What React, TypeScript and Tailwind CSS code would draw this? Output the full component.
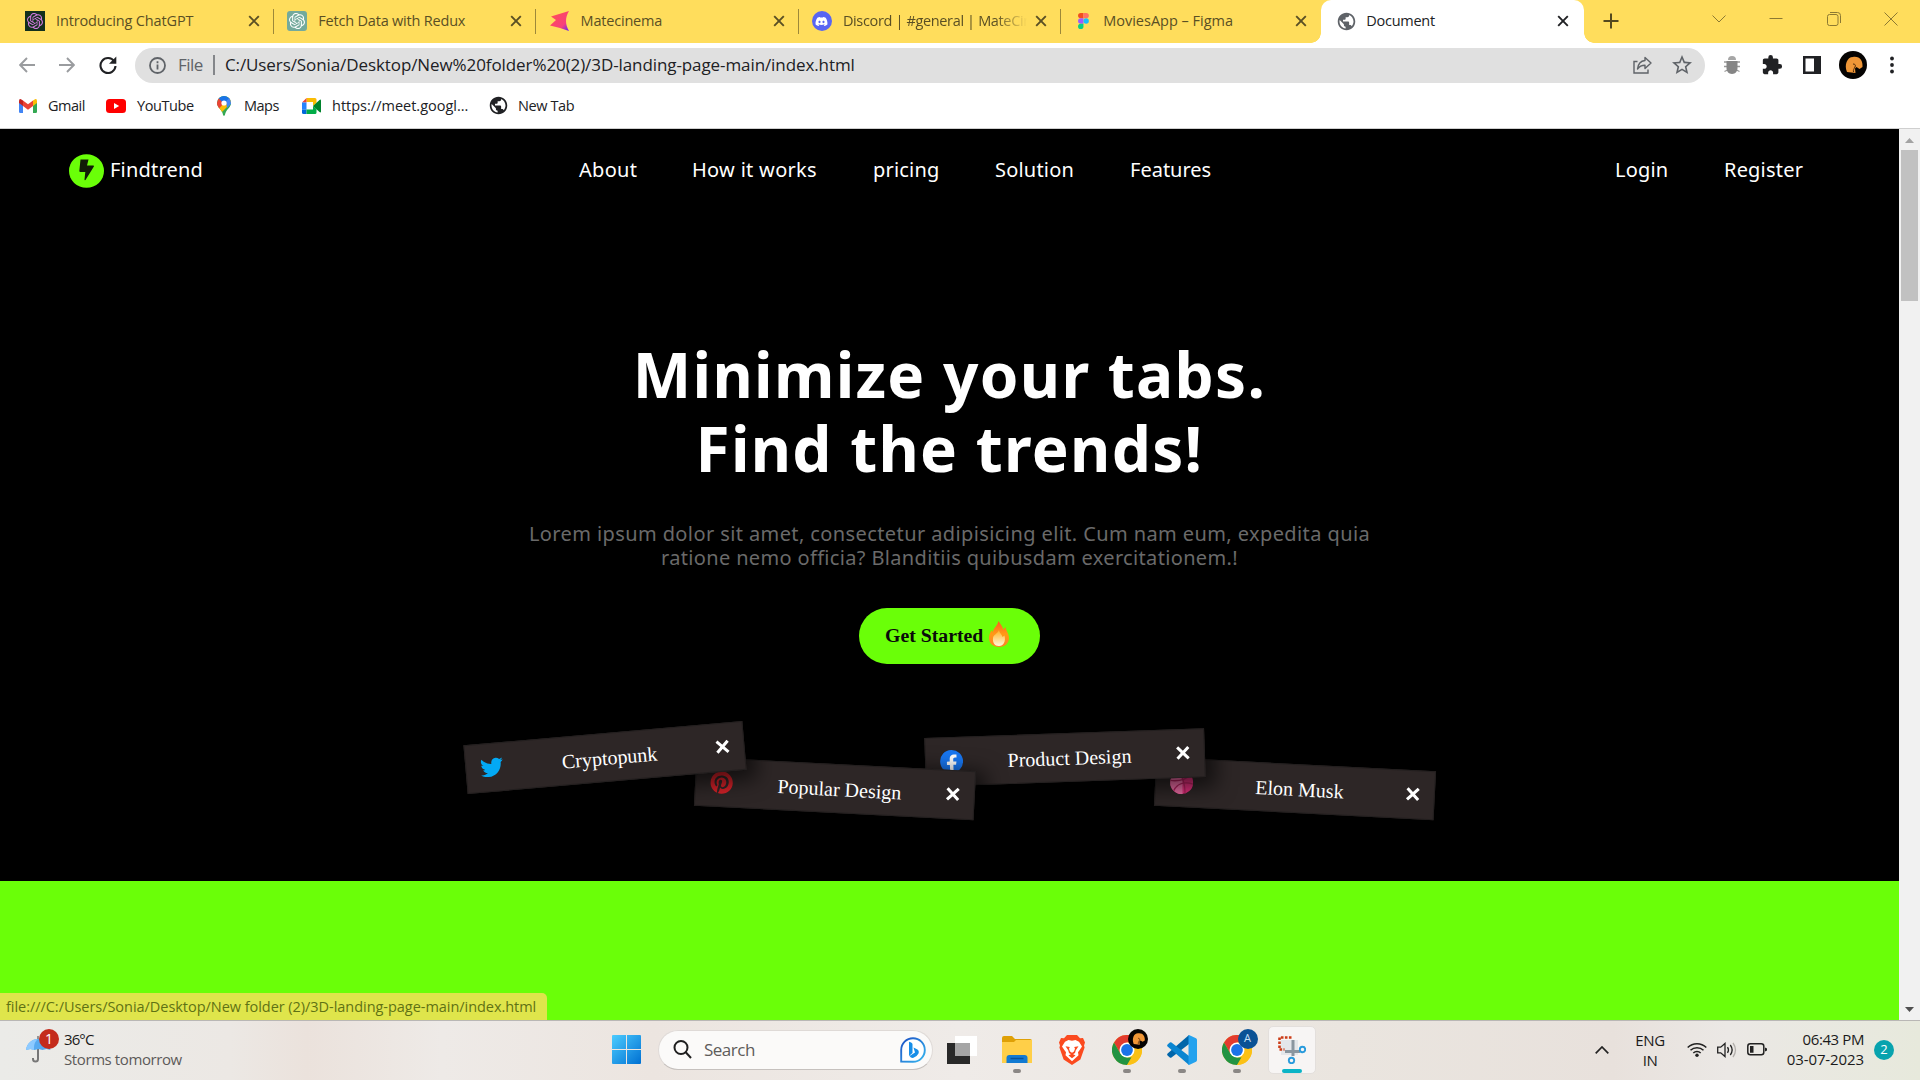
import React from 'react';
import { FaDiscord, FaPinterest, FaTwitter } from 'react-icons/fa';
import { MdExtension, MdPublic, MdStarBorder } from 'react-icons/md';
import { SiOpenai } from 'react-icons/si';

function Cross({ size, stroke }: { size: number; stroke: number }) {
  return (
    <svg width={size} height={size} viewBox="0 0 12 12" fill="none" stroke="currentColor" strokeWidth={stroke}>
      <path d="M1.2 1.2 10.8 10.8M10.8 1.2 1.2 10.8" />
    </svg>
  );
}

function MatecinemaIcon() {
  return (
    <svg width="20" height="20" viewBox="0 0 20 20">
      <defs>
        <linearGradient id="mate" x1="0" y1="0" x2="1" y2="1">
          <stop offset="0" stopColor="#ff5050" />
          <stop offset=".7" stopColor="#f8407c" />
          <stop offset="1" stopColor="#5b20ff" />
        </linearGradient>
      </defs>
      <path d="M19 0 1 5.500 6 9 0 14.500l10 2.500 9 3C15 13 15 7 19 0Z" fill="url(#mate)" />
    </svg>
  );
}

function FigmaIcon() {
  return (
    <svg width="20" height="20" viewBox="0 0 20 20">
      <path d="M10.500 1H7.500a3 3 0 0 0 0 6h3Z" fill="#f24e1e" />
      <path d="M10.500 1h3a3 3 0 0 1 0 6h-3Z" fill="#ff7262" />
      <path d="M10.500 7H7.500a3 3 0 0 0 0 6h3Z" fill="#a259ff" />
      <circle cx="13.500" cy="10" r="3" fill="#1abcfe" />
      <path d="M7.500 13h3v3a3 3 0 1 1-3-3Z" fill="#0acf83" />
    </svg>
  );
}

function GmailIcon() {
  return (
    <svg width="18" height="14" viewBox="0 0 18 14">
      <path d="M0 2v10.700Q0 14 1.300 14H4V6Z" fill="#4285f4" />
      <path d="M18 2v10.700q0 1.300-1.300 1.300H14V6Z" fill="#34a853" />
      <path d="M14 1.500 16 .2q2-.8 2 2V4l-4 3Z" fill="#fbbc04" />
      <path d="M4 1.500 9 5.200l5-3.700V7l-5 3.700L4 7Z" fill="#ea4335" />
      <path d="M4 1.500 2 .2Q0-.6 0 2.200V4l4 3Z" fill="#c5221f" />
    </svg>
  );
}

function YouTubeIcon() {
  return (
    <svg width="20" height="14" viewBox="0 0 20 14">
      <rect width="20" height="14" rx="3.500" fill="#f00" />
      <path d="m8 4 5.200 3L8 10Z" fill="#fff" />
    </svg>
  );
}

function MapsIcon() {
  return (
    <svg width="14" height="20" viewBox="0 0 14 20">
      <defs>
        <clipPath id="pin">
          <path d="M7 0a7 7 0 0 1 7 7c0 4-3.500 5.500-5.200 9.300C8 18 8 20 7 20s-1-2-1.800-3.700C3.500 12.500 0 11 0 7a7 7 0 0 1 7-7Z" />
        </clipPath>
      </defs>
      <g clipPath="url(#pin)">
        <path d="M0 0h14v20H0Z" fill="#34a853" />
        <path d="M-1 14 14-2v9L3 18Z" fill="#fbbc04" />
        <path d="M2 1 7 7l-7 8-2-5Z" fill="#ea4335" />
        <path d="M1.500 2 7-1l6 3-6 6Z" fill="#1a73e8" />
        <path d="M9 5.500 14 0v8l-4 4Z" fill="#4285f4" />
      </g>
      <circle cx="7" cy="7" r="2.600" fill="#fff" />
    </svg>
  );
}

function MeetIcon() {
  return (
    <svg width="19" height="16" viewBox="0 0 19 16">
      <path d="M4.500 0H13q1.500 0 1.500 1.500V5L11 8V4H4.500Z" fill="#fbbc04" />
      <path d="M0 4.500 4.500 0v4.500Z" fill="#ea4335" />
      <path d="M0 4.500h4.500v7H0Z" fill="#2684fc" />
      <path d="M0 11.500h4.500V16h-3Q0 16 0 14.500Z" fill="#0066da" />
      <path d="M4.500 16v-4.500H11V8l3.500 3v3.500Q14.500 16 13 16Z" fill="#00ac47" />
      <path d="m11 8 6.500-6q1.500-1 1.500.5v11q0 1.500-1.500.5Z" fill="#00832d" />
    </svg>
  );
}

const tabs = [
  { title: 'Introducing ChatGPT', track: 'tracking-[-0.15px]', icon: <span className="flex size-5 items-center justify-center bg-[#13301c] text-[#d47be0]"><SiOpenai size={16} /></span> },
  { title: 'Fetch Data with Redux', track: 'tracking-[-0.2px]', icon: <span className="flex size-5 items-center justify-center rounded-[3px] bg-[#74aa9c] text-white"><SiOpenai size={16} /></span> },
  { title: 'Matecinema', track: 'tracking-[-0.2px]', icon: <MatecinemaIcon /> },
  { title: 'Discord | #general | MateCin', track: 'tracking-[-0.35px]', icon: <span className="flex size-5 items-center justify-center rounded-full bg-[#5865f2] text-white"><FaDiscord size={13} /></span>, fade: true },
  { title: 'MoviesApp – Figma', track: '', icon: <FigmaIcon /> },
];

function TabStrip() {
  return (
    <div className="flex h-[43px] bg-[#ffdd5c] pl-3 text-[14.5px] text-[#5a4f24]">
      {tabs.map((t, i) => (
        <div key={t.title} className={`flex h-[42px] shrink-0 items-center pl-[13px] ${i === 4 ? 'w-[260px]' : 'w-[262.3px]'} ${t.track}`}>
          {t.icon}
          <span className={`ml-[11px] shrink-0 whitespace-nowrap ${t.fade ? 'w-[190px] [mask-image:linear-gradient(to_right,#000_80%,transparent_97%)]' : 'w-[183px]'}`}>{t.title}</span>
          <span className={`shrink-0 ${t.fade ? 'ml-0.5' : 'ml-[9px]'}`}><Cross size={12} stroke={1.9} /></span>
          <span className={`ml-[13px] h-[25px] w-px shrink-0 ${i < 4 ? 'bg-[#9d8839]' : ''}`} />
        </div>
      ))}
      <div className="relative flex h-full w-[263px] shrink-0 items-center rounded-t-[10px] bg-white pb-px pl-[15px] text-[#202124]">
        <span className="absolute bottom-0 -left-2.5 size-2.5 bg-[radial-gradient(circle_at_0_0,transparent_9.500px,#fff_10px)]" />
        <span className="absolute -right-2.5 bottom-0 size-2.5 bg-[radial-gradient(circle_at_100%_0,transparent_9.500px,#fff_10px)]" />
        <MdPublic size={21} color="#5f6368" />
        <span className="ml-[9px] w-[182px] shrink-0 tracking-[-0.25px]">Document</span>
        <span className="ml-[9px] shrink-0"><Cross size={12} stroke={1.9} /></span>
      </div>
      <div className="flex h-[42px] grow items-center pl-[19px]">
        <svg width="16" height="16" viewBox="0 0 16 16" stroke="#54491f" strokeWidth="2"><path d="M8 .5v15M.5 8h15" /></svg>
      </div>
      <div className="flex h-9 items-center gap-[43.500px] pr-[22px] pt-0.5 text-[#8c7932]">
        <svg width="14" height="14" viewBox="0 0 14 14" fill="none" stroke="currentColor"><path d="m.5 3.500 6.500 6.500 6.500-6.500" /></svg>
        <svg width="14" height="14" viewBox="0 0 14 14" fill="none" stroke="currentColor"><path d="M.5 6.500h13" /></svg>
        <svg width="14" height="14" viewBox="0 0 14 14" fill="none" stroke="currentColor"><rect x=".5" y="2.500" width="10.500" height="11" rx="2" /><path d="M3 .5h7.500q3 0 3 3V11" /></svg>
        <svg width="14" height="14" viewBox="0 0 14 14" fill="none" stroke="currentColor"><path d="m.5.5 13 13M13.500.5l-13 13" /></svg>
      </div>
    </div>
  );
}

function Arrow() {
  return <svg width="16" height="16" viewBox="0 0 16 16" fill="none" stroke="#9a9c9f" strokeWidth="1.900"><path d="M16 8H1.500M8 1 1.200 8 8 15" /></svg>;
}

function Toolbar() {
  return (
    <div className="flex h-[45px] items-center bg-white pb-px pl-[19px] text-[17px]">
      <Arrow />
      <span className="ml-6 rotate-180"><Arrow /></span>
      <svg className="ml-6" width="18" height="18" viewBox="0 0 18 18">
        <path d="M15.200 5.200A7.500 7.500 0 1 0 16.500 10" fill="none" stroke="#202124" strokeWidth="2.100" />
        <path d="M17.300.5v7.300H10Z" fill="#202124" />
      </svg>
      <div className="ml-[18px] flex h-[35px] w-[1570px] shrink-0 items-center rounded-full bg-[#e0e0e0] pr-[11px] pl-3.5">
        <svg width="17" height="17" viewBox="0 0 17 17" fill="none" stroke="#5f6368" strokeWidth="1.800"><circle cx="8.500" cy="8.500" r="7.500" /><path d="M8.500 7.500v5M8.500 4.200v2" /></svg>
        <span className="ml-3 tracking-[-0.5px] text-[#5f6368]">File</span>
        <span className="ml-2.5 h-5 w-0.5 bg-[#84868a]" />
        <span className="ml-2.5 tracking-[-0.09px] text-[#202124]">C:/Users/Sonia/Desktop/New%20folder%20(2)/3D-landing-page-main/index.html</span>
        <svg className="ml-auto" width="19" height="18" viewBox="0 0 19 18" fill="none" stroke="#5f6368" strokeWidth="1.400">
          <path d="M4.500 5.500H1V17h14v-3.500" />
          <path d="M12 1.500 18 7l-6 5.500V9.300C9 9.300 6.500 10.200 4.500 13 5 8.500 7.500 5 12 4.500Z" strokeLinejoin="round" />
        </svg>
        <span className="ml-[18px]"><MdStarBorder size={24} color="#5f6368" /></span>
      </div>
      <svg className="ml-[18px]" width="18" height="18" viewBox="0 0 18 18">
        <path d="M1 6h3M1 10.500h3M1.500 15.500l3-1.500M17 6h-3M17 10.500h-3M16.500 15.500l-3-1.500" stroke="#999" strokeWidth="1.300" />
        <path d="M5 4a4 4 0 0 1 8 0Z" fill="#a6a6a6" />
        <path d="M3.500 5h11v7c0 3-2 6-5.500 6s-5.500-3-5.500-6Z" fill="#858585" />
      </svg>
      <span className="ml-5"><MdExtension size={22} color="#202124" /></span>
      <svg className="ml-5" width="18" height="18" viewBox="0 0 18 18"><path d="M0 0h18v18H0Z" fill="#202124" /><path d="M2.500 2.500h8.500v13H2.500Z" fill="#fff" /></svg>
      <HorseAvatar className="ml-[18px] size-7" />
      <svg className="ml-[23px]" width="4" height="18" viewBox="0 0 4 18" fill="#202124"><circle cx="2" cy="2.500" r="1.900" /><circle cx="2" cy="9" r="1.900" /><circle cx="2" cy="15.500" r="1.900" /></svg>
    </div>
  );
}

function HorseAvatar({ className }: { className: string }) {
  return (
    <svg className={className} viewBox="0 0 28 28">
      <circle cx="14" cy="14" r="14" fill="#050302" />
      <path d="M8 21C5 14 8 6 14 6c7-1 10 4 9.500 10l-3 2-3-2-1.500 1.500.5 4.500Z" fill="#ef9637" />
      <path d="M14 13c2 0 3 1 2 3s-2 3-1.500 5" stroke="#4d2808" fill="none" />
    </svg>
  );
}

function Bookmarks() {
  return (
    <div className="flex h-[41px] items-center border-b border-[#cfcfcf] bg-white pb-[5px] pl-[19px] text-[14.5px] text-[#202124]">
      <GmailIcon />
      <span className="ml-[11px] w-[58px] tracking-[-0.5px]">Gmail</span>
      <YouTubeIcon />
      <span className="ml-[11px] w-20 tracking-[-0.4px]">YouTube</span>
      <MapsIcon />
      <span className="ml-[13px] w-[58px] tracking-[-0.5px]">Maps</span>
      <MeetIcon />
      <span className="ml-[11px] w-[156px]">https://meet.googl...</span>
      <MdPublic size={21} />
      <span className="ml-[9px] tracking-[-0.4px]">New Tab</span>
    </div>
  );
}

function SiteNav() {
  return (
    <nav className="flex h-[82px] items-center pl-[69px] text-xl tracking-[0.2px] text-white">
      <svg className="mt-0.5" width="35" height="34" viewBox="0 0 35 34">
        <ellipse cx="17.500" cy="17" rx="17.500" ry="16.800" fill="#6aff08" />
        <path d="M11.500 5.500h8l-1.500 6h6.500q.7.500.4 1L16.500 26q-1 .5-1-.5l.8-7.500h-5q-1 0-1-1Z" fill="#111c07" />
      </svg>
      <span className="ml-1.5 w-[469px]">Findtrend</span>
      <span className="w-[113px] tracking-[0.3px]">About</span>
      <span className="w-[181px] tracking-[0.3px]">How it works</span>
      <span className="w-[122px]">pricing</span>
      <span className="w-[135px]">Solution</span>
      <span className="w-[485px] tracking-[0px]">Features</span>
      <span className="w-[109px]">Login</span>
      <span>Register</span>
    </nav>
  );
}

function FacebookIcon() {
  return (
    <svg width="23" height="23" viewBox="0 0 23 23">
      <circle cx="11.500" cy="11.500" r="11.500" fill="#1877f2" />
      <path d="M9.700 22.900v-8H6.800v-3.300h2.900V9.100c0-2.900 1.700-4.500 4.300-4.500l2.600.2v2.800h-1.500c-1.400 0-1.900.9-1.900 1.800v2.200h3.200l-.5 3.300h-2.700v8Z" fill="#fff" />
    </svg>
  );
}

function DribbbleIcon() {
  return (
    <svg width="23" height="23" viewBox="0 0 23 23">
      <circle cx="11.500" cy="11.500" r="11.500" fill="#e0307c" />
      <path d="M0 11.500C0 5 5 0 11.500 0L13 23A11.500 11.500 0 0 1 0 11.500Z" fill="#ec6da5" />
      <path d="M8 .8c5 6 7 13 7.500 21.500M.3 10c8 .5 15-1.500 19.500-6.500M4 20c3-7 10-10 19-7.500" fill="none" stroke="#b3235f" strokeWidth="1.300" />
    </svg>
  );
}

const cards = [
  { title: 'Cryptopunk', icon: <FaTwitter size={23} color="#03a9f4" />, pose: 'z-40 -rotate-5' },
  { title: 'Popular Design', icon: <FaPinterest size={23} color="#cb2027" />, pose: 'z-30 rotate-3 mt-[31px]' },
  { title: 'Product Design', icon: <FacebookIcon />, pose: 'z-20 -rotate-2' },
  { title: 'Elon Musk', icon: <DribbbleIcon />, pose: 'z-10 rotate-3 mt-[31px]' },
];

function Hero() {
  return (
    <main className="flex h-[670px] flex-col items-center">
      <div className="mt-[126px] text-center text-[62px] leading-[74px] font-bold tracking-[1.3px] text-white">
        <h1>Minimize your tabs.</h1>
        <h1>Find the trends!</h1>
      </div>
      <p className="mt-[37px] text-center text-xl leading-6 tracking-[0.4px] text-[#6a6a6a]">
        Lorem ipsum dolor sit amet, consectetur adipisicing elit. Cum nam eum, expedita quia
        <br />
        <span className="tracking-[0.34px]">ratione nemo officia? Blanditiis quibusdam exercitationem.!</span>
      </p>
      <button className="mt-[38px] flex h-14 w-[181px] shrink-0 items-center rounded-full bg-[#6aff08] pl-[26px] font-['Liberation_Serif',serif] text-[19.800px] font-bold text-[#0a0a0a]">
        Get Started
        <svg className="mb-1 ml-[5px]" width="22" height="26" viewBox="0 0 22 26">
          <defs>
            <linearGradient id="flame" x1="0" y1="0" x2="0" y2="1">
              <stop offset="0" stopColor="#ff5a1f" />
              <stop offset=".5" stopColor="#ff9a16" />
              <stop offset="1" stopColor="#ff8125" />
            </linearGradient>
            <linearGradient id="flameCore" x1="0" y1="0" x2="0" y2="1">
              <stop offset="0" stopColor="#ffb120" />
              <stop offset="1" stopColor="#fff8dc" />
            </linearGradient>
          </defs>
          <path d="M10.500 0c1.500 3 4 4.500 4.700 8.500L17.500 6c0 3 3.500 6.500 3.500 11 0 5-4 9-10 9S1 22.500 1 17c0-3 1-6 3-8l.8 2.500C5 7 9.500 5 10.500 0Z" fill="url(#flame)" />
          <path d="M11 9c.5 3.500 3 4 3.500 7l2-1.500c1.500 6-1 10.500-5.500 10.500s-6.500-3.500-6-8c.5-3.500 4.500-4 6-8Z" fill="url(#flameCore)" />
        </svg>
      </button>
      <div className="mt-[69px] flex items-start">
        {cards.map((c, i) => (
          <div key={c.title} className={`relative flex h-[49px] w-[280px] items-center justify-between border border-[#231f1f] bg-[#2d2626] px-3.5 font-['Liberation_Serif',serif] text-xl text-white shadow-[5px_5px_20px_5px_rgba(0,0,0,0.6)] ${i > 0 ? '-ml-[50px]' : ''} ${c.pose}`}>
            {c.icon}
            <span>{c.title}</span>
            <span className="pb-0.5"><Cross size={14} stroke={2.600} /></span>
          </div>
        ))}
      </div>
    </main>
  );
}

function Scrollbar() {
  return (
    <div className="flex w-[21px] flex-col items-center justify-between bg-[#f1f1f1] pt-[9px] pb-2">
      <div className="flex flex-col items-center gap-[7px]">
        <svg width="9" height="5" viewBox="0 0 9 5" fill="#a3a3a3"><path d="M4.500 0 9 5H0Z" /></svg>
        <div className="h-[151px] w-[17px] bg-[#c1c1c1]" />
      </div>
      <svg width="9" height="5" viewBox="0 0 9 5" fill="#505050"><path d="M0 0h9L4.500 5Z" /></svg>
    </div>
  );
}

function ChromeIcon({ children }: { children: React.ReactNode }) {
  return (
    <span className="relative">
      <svg width="30" height="30" viewBox="0 0 30 30">
        <circle cx="15" cy="15" r="15" fill="#fbc116" />
        <path d="M2 7.500A15 15 0 0 1 28 7.500H15L8.500 18.800Z" fill="#e33b2e" />
        <path d="M2 7.500 8.500 18.800 15 22.500h6.500L15 30A15 15 0 0 1 2 7.500Z" fill="#229342" />
        <path d="M21.500 18.700 15 30A15 15 0 0 0 28 7.500H15Z" fill="#fbc116" />
        <circle cx="15" cy="15" r="7.500" fill="#fff" />
        <circle cx="15" cy="15" r="5.900" fill="#1a73e8" />
      </svg>
      <span className="absolute -top-1.5 left-4">{children}</span>
    </span>
  );
}

function BraveIcon() {
  return (
    <svg width="26" height="30" viewBox="0 0 26 30">
      <path d="M8 0h10l3 3.200L24 3l2 4.500-1 3 .6 2-4.200 12L13 30l-8.400-5.500-4.200-12 .6-2-1-3L2 3l3 .2Z" fill="#fb4a1f" />
      <path d="m9.500 5 3.500.8 3.500-.8 3.500 1.800 3 4.700-2.500 3.700-1.500 2 .5 3-6.500 6-6.500-6 .5-3-1.500-2L3 11.500l3-4.700Z" fill="#fff" />
      <path d="m6.500 11.300 4.300.8-.8 1.700 1 2.700 2 1.200 2-1.200 1-2.700-.8-1.700 4.300-.8-2.700 4-.8 2.700-3 1.800-3-1.800-.8-2.700ZM9.500 20.500 13 18.600l3.500 1.900-3.500 2.700Z" fill="#fb4a1f" />
      <path d="m11.500 9 1.500.5 1.500-.5-.500 7.500-1 .8-1-.8Z" fill="#fff" />
    </svg>
  );
}

function TaskIcon({ children, running }: { children: React.ReactNode; running?: boolean }) {
  return (
    <div className="relative flex h-full w-[55px] items-center justify-center">
      {children}
      {running && <span className="absolute bottom-[5px] h-1 w-2 rounded-full bg-[#8b8785]" />}
    </div>
  );
}

function Taskbar() {
  return (
    <footer className="flex h-[60px] items-center border-t border-[#b9b7b5] bg-[linear-gradient(90deg,#ebebe8_0%,#ece8e4_12%,#ebe2dc_16%,#eeeae7_23%,#ece5e0_34%,#efebe8_50%,#eae5df_70%,#e8e1dc_84%,#ebe8e5_90%,#e7e9dc_100%)] pb-0.5 text-[15px] text-[#1b1b1b]">
      <div className="flex w-[612px] items-center pb-0.5 pl-[26px]">
        <span className="relative">
          <svg width="25" height="30" viewBox="0 0 25 30">
            <path d="M12 13v12a2.500 2.500 0 0 1-5 0v-1" fill="none" stroke="#777" strokeWidth="2" />
            <path d="M12 2v4" stroke="#777" strokeWidth="1.500" />
            <path d="M0 16C1 9 6 5 12 5s11 4 12.500 11l-4-1-4 1-4-1-4 1-4-1Z" fill="#58aaf0" />
            <path d="M0 16C1 9 6 5 12 5 8 8 8 12 8 16l-4-1Z" fill="#8dcaff" />
          </svg>
          <span className="absolute -top-[5px] left-[13px] flex size-5 items-center justify-center rounded-full bg-[#c42b1c] text-sm text-white">1</span>
        </span>
        <div className="ml-[13px] leading-5">
          <div className="tracking-[-0.9px]">36°C</div>
          <div className="tracking-[-0.40px] text-[#5c5a59]">Storms tomorrow</div>
        </div>
      </div>
      <svg width="29" height="29" viewBox="0 0 29 29">
        <defs>
          <linearGradient id="win" x1="0" y1="0" x2="1" y2="1"><stop offset="0" stopColor="#4cccff" /><stop offset="1" stopColor="#0070d2" /></linearGradient>
        </defs>
        <path d="M1 0h13v14H0V1Q0 0 1 0ZM15 0h13q1 0 1 1v13H15ZM0 15h14v14H1q-1 0-1-1ZM15 15h14v13q0 1-1 1H15Z" fill="url(#win)" />
      </svg>
      <div className="ml-[17px] flex h-10 w-[275px] items-center rounded-full border border-[#dfdad7] border-b-[#c6c1be] bg-[#fbfaf9] pr-[6px] pl-[14px] text-[17px] text-[#5e5c5b]">
        <svg width="19" height="19" viewBox="0 0 19 19" fill="none" stroke="#1f1f1f" strokeWidth="2"><circle cx="8" cy="7.500" r="6.500" /><path d="m12.500 12 5.500 6" /></svg>
        <span className="ml-3 tracking-[-0.5px]">Search</span>
        <svg className="ml-auto" width="26" height="26" viewBox="0 0 26 26">
          <defs><linearGradient id="bing" x1="0" y1="0" x2="1" y2="1"><stop offset="0" stopColor="#1b4fc4" /><stop offset="1" stopColor="#37b8f0" /></linearGradient></defs>
          <path d="M1.200 24.500V13A11.800 11.800 0 1 1 13 24.800Z" fill="#fff" stroke="url(#bing)" strokeWidth="1.900" />
          <path d="M9 5.500q0-1 1-.5l1.500.8q1 .5 1 1.500V16L9 19ZM13.500 10.500l3.500 1.700q2.500 1.500 1.500 4.300-1.500 3-5 4.300-2.500.5-4-1.800l5.500-3.500Z" fill="#178ee8" />
        </svg>
      </div>
      <div className="ml-px flex h-full">
        <TaskIcon>
          <svg width="30" height="28" viewBox="0 0 30 28">
            <path d="M0 7h23v21H0Z" fill="#292929" />
            <path d="M8 0h22v20H8Z" fill="#fff" />
            <path d="M8 7h15v13H8Z" fill="#a5a5a5" />
          </svg>
        </TaskIcon>
        <TaskIcon running>
          <svg width="30" height="27" viewBox="0 0 30 27">
            <path d="M0 2Q0 0 2 0h8l3 3h15q2 0 2 2v5H0Z" fill="#dfa006" />
            <path d="M0 6h12l2-2h16v23H0Z" fill="#ffcf48" />
            <path d="M4.500 27v-5q0-3 3-3h15q3 0 3 3v5Z" fill="#127ad2" />
            <path d="M8.500 22.500h13" stroke="#07529a" strokeWidth="1.500" />
          </svg>
        </TaskIcon>
        <TaskIcon><BraveIcon /></TaskIcon>
        <TaskIcon running><ChromeIcon><HorseAvatar className="size-5" /></ChromeIcon></TaskIcon>
        <TaskIcon running>
          <svg width="30" height="30" viewBox="0 0 30 30">
            <path d="M22 0v9L4.500 22.500q-1 .5-1.700 0L.6 20.500q-1-1 0-2Z" fill="#0065a9" />
            <path d="M22 30v-9L4.500 7.500q-1-.5-1.700 0L.6 9.500q-1 1 0 2Z" fill="#0a85d1" />
            <path d="m22 0 7 3.200q1 .6 1 1.800v20q0 1.200-1 1.800L22 30q-1-.5-.500-1.500v-27Q21 .5 22 0Z" fill="#24a2ee" />
          </svg>
        </TaskIcon>
        <TaskIcon running>
          <ChromeIcon><span className="flex size-5 items-center justify-center rounded-full bg-[#0a5295] text-[11px] text-[#c8e0f5]">A</span></ChromeIcon>
        </TaskIcon>
        <TaskIcon>
          <span className="relative flex h-12 w-12 items-center justify-center rounded-[5px] border border-[#e3dfdc] bg-[#f7f5f4]">
            <svg width="28" height="28" viewBox="0 0 28 28" fill="none">
              <path d="M3 4h17v15H3Z" fill="#e4e7ea" />
              <path d="M13.500 1.500h-12v12h5" stroke="#cb3c17" strokeWidth="2.600" strokeDasharray="2.600 1.400" />
              <path d="M15 4v16M7 15.500h15" stroke="#8a969f" strokeWidth="3" />
              <circle cx="24.500" cy="13.500" r="2.700" stroke="#2a9bdc" strokeWidth="1.900" />
              <circle cx="13.500" cy="24.500" r="2.700" stroke="#2a9bdc" strokeWidth="1.900" />
            </svg>
            <span className="absolute bottom-0 h-1 w-5 rounded-full bg-[#0bb4c6]" />
          </span>
        </TaskIcon>
      </div>
      <svg className="ml-[276px]" width="14" height="8" viewBox="0 0 14 8" fill="none" stroke="#222" strokeWidth="1.700"><path d="m.7 7.300 6.300-6.300 6.300 6.300" /></svg>
      <div className="ml-[26px] w-[30px] text-center leading-5 tracking-[-0.4px]">ENG<br />IN</div>
      <svg className="ml-[22px]" width="20" height="15" viewBox="0 0 20 15" fill="none" stroke="#222" strokeWidth="1.500">
        <path d="M.7 5.500a13.200 13.200 0 0 1 18.600 0M3.500 8.300a9.300 9.300 0 0 1 13 0M6.300 11a5.300 5.300 0 0 1 7.400 0" />
        <circle cx="10" cy="13.200" r="1.700" fill="#222" stroke="none" />
      </svg>
      <svg className="ml-2.5" width="20" height="16" viewBox="0 0 20 16" fill="none" stroke="#222" strokeWidth="1.300">
        <path d="M.7 5.200h3L8 1.500v13l-4.300-3.700h-3Z" />
        <path d="M10.500 5.200q2 2.800 0 5.600M13.300 3q3.700 5 0 10" />
        <path d="M16 1q5 7 0 14" stroke="#b3afac" />
      </svg>
      <svg className="ml-2.5" width="20" height="13" viewBox="0 0 20 13" fill="none" stroke="#222" strokeWidth="1.500">
        <rect x=".8" y=".8" width="16" height="11" rx="2.500" />
        <path d="M3 3h3.500v6.800H3ZM18 4.500l2 1v2l-2 1Z" fill="#222" stroke="none" />
      </svg>
      <div className="ml-[19px] w-[78px] pb-0.5 text-right leading-5">
        <div className="tracking-[-0.40px]">06:43 PM</div>
        <div className="tracking-[-0.10px]">03-07-2023</div>
      </div>
      <span className="ml-2.5 flex size-5 items-center justify-center rounded-full bg-[#08a3ae] text-[13px] text-white">2</span>
    </footer>
  );
}

export default function App() {
  return (
    <div className="flex h-[1080px] w-[1920px] flex-col overflow-hidden bg-white font-['Open_Sans',sans-serif]">
      <TabStrip />
      <Toolbar />
      <Bookmarks />
      <div className="flex h-[891px]">
        <div className="relative w-[1899px] bg-black font-['Noto_Sans',sans-serif]">
          <SiteNav />
          <Hero />
          <div className="h-[139px] bg-[#6aff08]" />
          <div className="absolute bottom-0 left-0 flex h-[27px] w-[547px] items-center rounded-tr-[5px] bg-[#dfe54b] pl-1.5 font-['Open_Sans',sans-serif] text-[14.5px] tracking-[-0.04px] whitespace-nowrap text-[#5f7214]">
            file:///C:/Users/Sonia/Desktop/New folder (2)/3D-landing-page-main/index.html
          </div>
        </div>
        <Scrollbar />
      </div>
      <Taskbar />
    </div>
  );
}
